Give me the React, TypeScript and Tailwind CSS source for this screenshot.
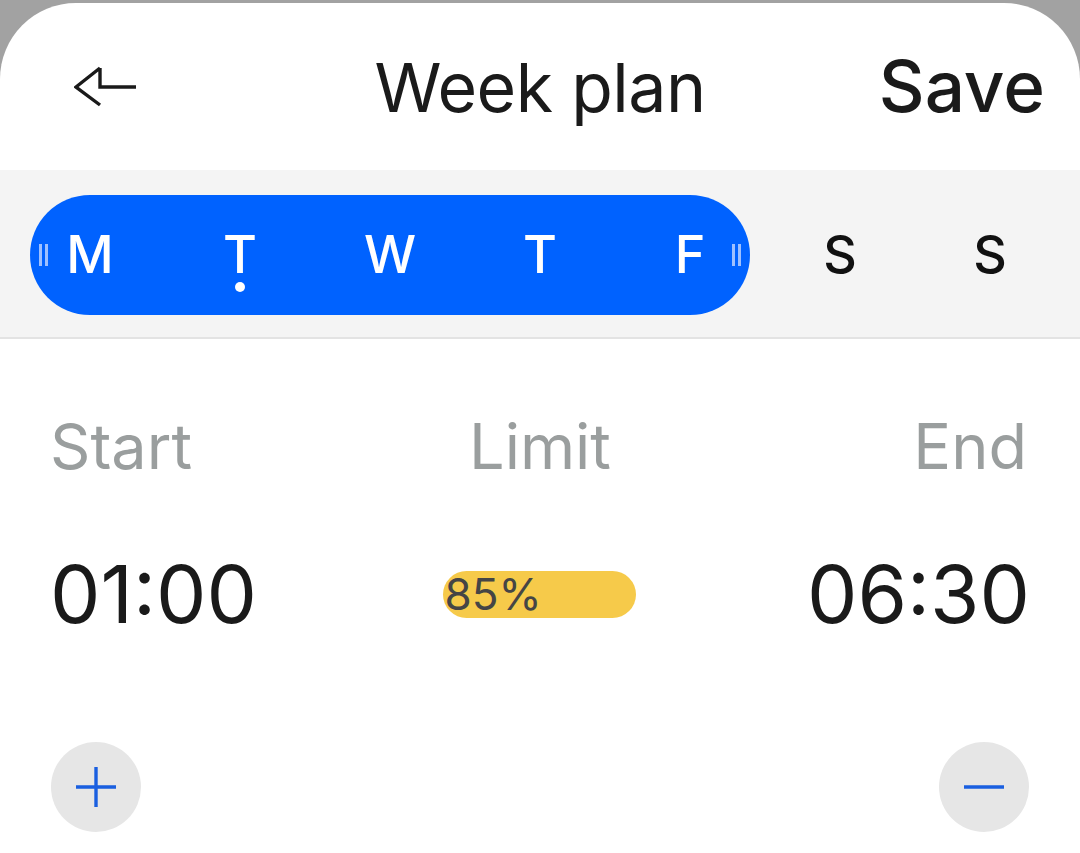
import React from 'react'

const days = ['M', 'T', 'W', 'T', 'F', 'S', 'S']

function BackArrow() {
  return (
    <svg width="64" height="44" viewBox="0 0 64 44" fill="none">
      <path
        d="M26 3 L2 22 L26 40 M26 3 L26 22 L62 22"
        stroke="#1a1a1a"
        strokeWidth="3.4"
        strokeLinejoin="miter"
        strokeLinecap="butt"
      />
    </svg>
  )
}

function Handle() {
  return (
    <div className="flex gap-[3px] h-[22px]">
      <div className="w-[3px] h-full bg-[#9ec0ff]" />
      <div className="w-[3px] h-full bg-[#9ec0ff]" />
    </div>
  )
}

export default function App() {
  return (
    <div
      className="w-[1080px] h-[853px] bg-[#a2a2a2] pt-[3px] overflow-hidden"
      style={{ fontFamily: 'Inter, "Noto Sans", sans-serif' }}
    >
      <div className="bg-white rounded-t-[76px] h-[850px] overflow-hidden flex flex-col">
        {/* Header */}
        <div className="h-[167px] grid grid-cols-[1fr_auto_1fr] items-center px-[34px]">
          <div className="pl-[40px]">
            <BackArrow />
          </div>
          <div className="text-[68px] text-[#1a1a1a] leading-none tracking-[-0.5px]">Week plan</div>
          <div className="text-right text-[71px] text-[#1a1a1a] font-medium leading-none pr-[1px]">Save</div>
        </div>

        {/* Day picker */}
        <div className="bg-[#f4f4f4] border-b-2 border-[#e3e3e3] h-[169px] px-[15px] pt-[25px]">
          <div className="relative h-[120px]">
            <div className="absolute left-[15px] top-0 h-[120px] w-[720px] rounded-full bg-[#0062ff]" />
            <div className="absolute left-[24px] top-[49px]">
              <Handle />
            </div>
            <div className="absolute left-[717px] top-[49px]">
              <Handle />
            </div>
            <div className="relative grid grid-cols-7 h-full">
              {days.map((d, i) => (
                <div key={i} className="relative flex items-center justify-center">
                  <span
                    className={`text-[52px] leading-none font-medium ${i < 5 ? 'text-white' : 'text-[#111]'}`}
                  >
                    {d}
                  </span>
                  {i === 1 && (
                    <div className="absolute left-1/2 top-[87px] -translate-x-1/2 w-[10px] h-[10px] rounded-full bg-white" />
                  )}
                </div>
              ))}
            </div>
          </div>
        </div>

        {/* Limit info */}
        <div className="px-[50px] pt-[76px]">
          <div className="grid grid-cols-3 text-[63px] leading-none text-[#9a9e9e]">
            <div>Start</div>
            <div className="text-center">Limit</div>
            <div className="text-right pr-[3px]">End</div>
          </div>
          <div className="grid grid-cols-3 items-center mt-[76px]">
            <div className="text-[80px] leading-none text-[#1a1a1a]">01:00</div>
            <div className="flex justify-center">
              <div className="w-[193px] h-[47px] rounded-full bg-[#f6ca4a] flex items-center pl-[1px]">
                <span className="text-[44px] leading-none text-[#454545]">85%</span>
              </div>
            </div>
            <div className="text-[80px] leading-none text-[#1a1a1a] text-right">06:30</div>
          </div>
          <div className="flex justify-between mt-[108px] pl-[1px] pr-[1px]">
            <div className="w-[90px] h-[90px] rounded-full bg-[#e6e6e6] flex items-center justify-center">
              <svg width="42" height="42" viewBox="0 0 42 42">
                <path d="M21 1 V41 M1 21 H41" stroke="#1a5fe0" strokeWidth="3.4" />
              </svg>
            </div>
            <div className="w-[90px] h-[90px] rounded-full bg-[#e6e6e6] flex items-center justify-center">
              <svg width="42" height="42" viewBox="0 0 42 42">
                <path d="M1 21 H41" stroke="#1a5fe0" strokeWidth="3.4" />
              </svg>
            </div>
          </div>
        </div>
      </div>
    </div>
  )
}
